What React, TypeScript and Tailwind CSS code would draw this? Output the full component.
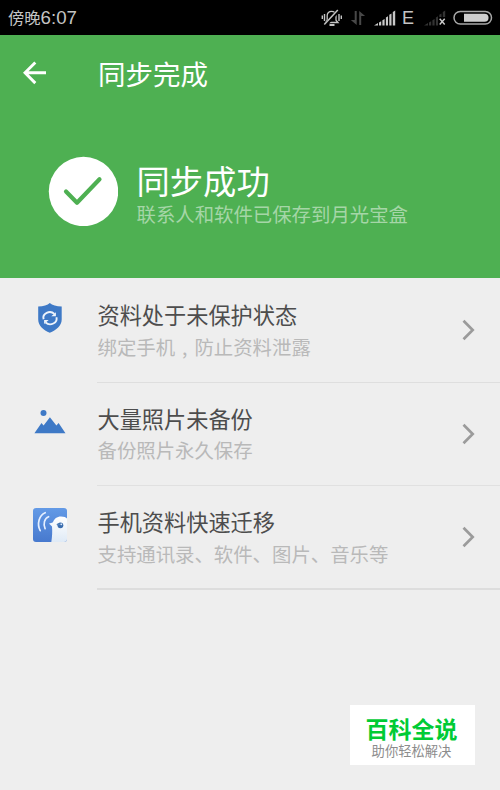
import React from "react";

const cjk = "font-['Noto_Sans_CJK_SC',sans-serif]";

function BellOff() {
  return (
    <svg width="22" height="20" viewBox="0 0 22 20" fill="none" stroke="#c4c4c4" strokeWidth="1.3">
      <path d="M4.7 14.5 6.2 12.2V7.5C6.2 5 8 3.3 10.5 3.3S15 5 15 7.5v4.700l2 2.300H4.700Z" />
      <path d="M3.500 18 18 1.800" stroke="#000" strokeWidth="3.500" />
      <path d="M3.300 16.500 16.800 2" strokeWidth="1.500" />
      <path d="M8.500 17h5" strokeWidth="2" />
      <path d="M1.300 7.500v3.500M3.500 6v7M18 6v7M20.300 7.500v3.500" strokeWidth="1.400" />
    </svg>
  );
}

function DataArrows() {
  return (
    <svg width="16" height="16" viewBox="0 0 16 16" fill="#484848">
      <path d="M6.700 1v14L.8 10h3.900V1ZM9.200 15V1l5.900 5h-3.900v9Z" />
    </svg>
  );
}

function Signal({ dim = false }: { dim?: boolean }) {
  return (
    <svg width="22" height="16" viewBox="0 0 22 16" fill={dim ? "#333333" : "#c8c8c8"}>
      <path d="M0 15.500 4 13v2.500ZM5 12.500l2.200-1.300v4.300H5ZM8.400 10.300l2.200-1.200v6.400H8.400ZM11.900 7.500 14 6.300v9.200h-2.100ZM15.300 4.800l2.200-1.400v12.100h-2.200ZM18.800 2 21.200.5v15h-2.400Z" />
      {dim && (
        <>
          <path d="M14 7h8v9h-8Z" fill="#000" />
          <path d="m15.700 8.700 5 5.800m0-5.800-5 5.800" stroke="#cccccc" strokeWidth="1.400" />
        </>
      )}
    </svg>
  );
}

function Battery() {
  return (
    <svg width="40" height="16" viewBox="0 0 40 16">
      <rect x="1" y="1.500" width="37.500" height="12.500" rx="6.250" fill="none" stroke="#a8a8a8" strokeWidth="1.500" />
      <path d="M11 3.700h20.500a4 4 0 0 1 0 8.100H11Z" fill="#cecece" />
    </svg>
  );
}

function Shield() {
  return (
    <svg width="26" height="32" viewBox="0 0 26 32">
      <path d="M12.800 1C10.500 3.200 6.500 4.300 1.200 4.600v12.900c0 6.300 5.200 10.700 11.600 13.300 6.400-2.600 11.900-7 11.900-13.300V4.600C19.500 4.300 15.200 3.200 12.800 1Z" fill="#3e79c6" />
      <g fill="none" stroke="#edf3fb" strokeWidth="1.900">
        <path d="M6.600 17.200a6.400 5.600 0 0 1 10.800-5.300M19.400 15.200a6.400 5.600 0 0 1-10.800 5.300" />
      </g>
      <path d="M18.900 10.300v4h-4.600ZM7.100 22.100v-4h4.600Z" fill="#edf3fb" />
    </svg>
  );
}

function Mountains() {
  return (
    <svg width="32" height="26" viewBox="0 0 32 26" fill="#3e79c6">
      <circle cx="9.500" cy="4" r="3" />
      <path d="M.4 24.300 7.500 14l2.100 2.500 6.300-8.300 6.500 8.300 2.200-2.500 6.900 10.300Z" />
    </svg>
  );
}

function Bird() {
  return (
    <svg width="34" height="34" viewBox="0 0 34 34">
      <defs>
        <linearGradient id="sky" x2="0" y2="1">
          <stop stopColor="#639ae6" />
          <stop offset="1" stopColor="#4779ce" />
        </linearGradient>
        <linearGradient id="bird" x2="0" y2="1">
          <stop stopColor="#fff" />
          <stop offset="1" stopColor="#dfeaf6" />
        </linearGradient>
        <clipPath id="tile">
          <rect width="34" height="34" rx="3" />
        </clipPath>
      </defs>
      <g clipPath="url(#tile)">
        <rect width="34" height="34" fill="url(#sky)" />
        <path d="M16 15.600c1.500-.5 3-.8 4-1.300 1-3.300 4-5.700 8-5.700 3 0 5 .8 6 2V34H18.300c.8-5 1.200-10.500.7-15.500-1-.8-2-2-3-2.900Z" fill="url(#bird)" />
        <circle cx="27.400" cy="17.300" r="2.900" fill="#3c6eae" />
        <path d="M23.800 16.100c1.300.7 3.200.6 4.900-.5" fill="none" stroke="#5382bb" strokeWidth="1.200" />
        <circle cx="28.300" cy="16.300" r=".9" fill="#dceaff" />
        <g fill="none" stroke="#e6f0ff" strokeLinecap="round" strokeWidth="1.700">
          <path d="M12.200 4.700C6.200 7 3.600 16 7.200 22.700" />
          <path d="M15.600 8.700c-4.200 1.500-5.700 7.600-3.500 12" />
        </g>
      </g>
    </svg>
  );
}

const items: { icon: React.ReactNode; title: string; text: React.ReactNode; line: string }[] = [
  {
    icon: <span className="ml-[37px] mt-[23px]"><Shield /></span>,
    title: "资料处于未保护状态",
    text: <>绑定手机<span className="inline-block w-[19.400px] text-center">,</span>防止资料泄露</>,
    line: "border-b border-[#dedede]",
  },
  {
    icon: <span className="ml-[34px] mt-[26px]"><Mountains /></span>,
    title: "大量照片未备份",
    text: "备份照片永久保存",
    line: "border-b border-[#e0e0e0]",
  },
  {
    icon: <span className="ml-[33px] mt-[22px]"><Bird /></span>,
    title: "手机资料快速迁移",
    text: "支持通讯录、软件、图片、音乐等",
    line: "border-b-2 border-[#dddddd]",
  },
];

export default function App() {
  return (
    <div lang="zh-CN" className={`relative flex h-[790px] w-[500px] flex-col overflow-hidden bg-[#eeeeee] ${cjk}`}>
      <header className="flex h-[35px] shrink-0 items-center bg-black pl-2 text-[#c4c4c4]">
        <span className="text-[16.300px] leading-[35px]">傍晚</span>
        <span className="font-['Liberation_Sans',sans-serif] text-[18.700px] leading-[35px]">6:07</span>
        <div className="ml-auto mr-[7px] flex items-center">
          <BellOff />
          <span className="ml-[7px]"><DataArrows /></span>
          <span className="ml-[8px]"><Signal /></span>
          <span className="ml-[6px] w-[16px] pt-[2px] font-['Liberation_Sans',sans-serif] text-[18px] leading-[33px]">E</span>
          <span className="ml-[6px]"><Signal dim /></span>
          <span className="ml-[7px]"><Battery /></span>
        </div>
      </header>

      <section className="h-[243px] shrink-0 bg-[#4eb052] text-white">
        <div className="flex h-[76px] items-center">
          <svg className="ml-[23px]" width="24" height="24" viewBox="0 0 24 24" fill="none" stroke="white" strokeWidth="2.900">
            <path d="M23 11.800H2M12.300 1.500 2 11.800l10.300 10.300" />
          </svg>
          <h1 className="ml-[51px] text-[27.500px] leading-[38px]">同步完成</h1>
        </div>
        <div className="ml-[48px] mt-[45px] flex">
          <svg width="70" height="70" viewBox="0 0 70 70">
            <circle cx="35.500" cy="35.500" r="34.700" fill="white" />
            <path d="m18 35.500 11 11.200 22.500-23.500" fill="none" stroke="#4eb052" strokeWidth="4.200" strokeLinecap="round" strokeLinejoin="round" />
          </svg>
          <div className="ml-[18.500px] mt-[4px]">
            <h2 className="text-[33.300px] leading-[40px]">同步成功</h2>
            <p className="mt-px text-[19.400px] leading-[26px] text-[#a5d6a7]">联系人和软件已保存到月光宝盒</p>
          </div>
        </div>
      </section>

      <main className="pt-px">
        {items.map((item) => (
          <div key={item.title} className="flex h-[103.700px]">
            <div className="flex w-[97px] shrink-0 items-start">{item.icon}</div>
            <div className={`flex grow items-center justify-between ${item.line}`}>
              <div className="self-start pl-[0.500px] pt-[20px]">
                <h3 className="text-[22.200px] leading-[30px] text-[#4d4d4d]">{item.title}</h3>
                <p className="mt-[4.500px] text-[19.400px] leading-[26px] text-[#b9b9b9]">{item.text}</p>
              </div>
              <svg className="mr-[24px]" width="14" height="22" viewBox="0 0 14 22" fill="none" stroke="#9b9b9b" strokeWidth="2.700">
                <path d="m1.500 1.800 9.200 9.200-9.200 9.200" />
              </svg>
            </div>
          </div>
        ))}
      </main>

      <aside className="absolute left-[350px] top-[705px] flex h-[60px] w-[125px] flex-col items-center bg-white pr-[2px] pt-[8px]">
        <strong className="text-[23px] font-bold leading-[30px] text-[#00cb35]">百科全说</strong>
        <span className="mt-px text-[13.300px] leading-[14px] text-[#8c8c8c]">助你轻松解决</span>
      </aside>
    </div>
  );
}
